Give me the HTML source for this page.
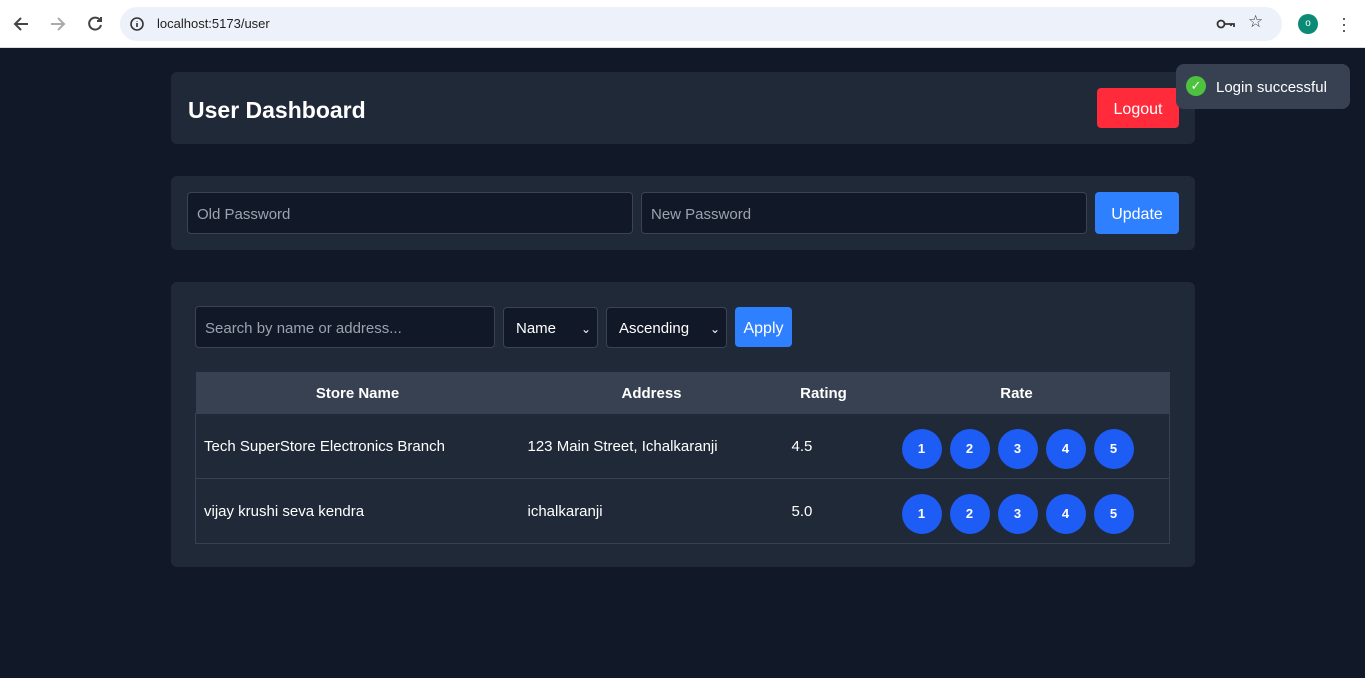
<!DOCTYPE html>
<html><head><meta charset="utf-8"><style>
*{box-sizing:border-box;margin:0;padding:0}
body{width:1365px;height:678px;background:#111827;font-family:"Liberation Sans",sans-serif;color:#fff;position:relative;overflow:hidden}
.chrome{position:absolute;left:0;top:0;width:1365px;height:48px;background:#fff;border-bottom:1px solid #ddd}
.url{position:absolute;left:120px;top:7px;width:1162px;height:34px;background:#edf1f9;border-radius:17px}
.card{position:absolute;left:171px;width:1024px;background:#1f2937;border-radius:6px}
.inp{position:absolute;background:#111827;border:1px solid #3b4452;border-radius:4px;color:#9ca3af;font-size:15px;padding-left:9px;padding-top:2px;display:flex;align-items:center}
.btn{position:absolute;border-radius:4px;color:#fff;font-size:16px;display:flex;align-items:center;justify-content:center;padding-top:3px}
table{position:absolute;left:24px;top:90px;width:975px;border-collapse:collapse;font-size:15px}
th{background:#374151;height:41px;font-weight:bold;text-align:center;padding-top:2px}
td{height:65px;border:1px solid #374151;border-left:none;border-right:none;padding-left:8px;padding-top:2px}
tr td:first-child{border-left:1px solid #374151}tr td:last-child{border-right:1px solid #374151}
.c{display:inline-block;width:40px;height:40px;border-radius:50%;background:#1d5cf5;margin-right:8px;font-size:13px;font-weight:bold;line-height:40px;text-align:center}
</style></head><body>
<div class="chrome">
<svg style="position:absolute;left:12px;top:15px" width="100" height="18" fill="none" stroke-width="2"><path d="M16 9H3M9 3L3 9l6 6" stroke="#444"/><path d="M39 9h13M46 3l6 6-6 6" stroke="#aaa"/><path d="M88 5a6 6 0 1 0 1 5M89 2v4h-4" stroke="#444"/></svg>
<div class="url"><svg style="position:absolute;left:10px;top:10px" width="14" height="14"><circle cx="7" cy="7" r="6" fill="none" stroke="#333" stroke-width="1.6"/><path d="M7 6v4M7 4v.5" stroke="#333" stroke-width="1.6"/></svg>
<span style="position:absolute;left:37px;top:9px;font-size:13px;color:#222">localhost:5173/user</span>
<svg style="position:absolute;left:1096px;top:11px" width="20" height="12" fill="none" stroke="#333" stroke-width="1.8"><circle cx="5" cy="6" r="3.5"/><path d="M9 6h9v3M15 6v2"/></svg>
<span style="position:absolute;left:1128px;top:5px;font-size:17px;color:#333">☆</span></div>
<div style="position:absolute;left:1298px;top:14px;width:20px;height:20px;border-radius:50%;background:#0b8a76;color:#fff;font-size:10px;text-align:center;line-height:20px">o</div>
<div style="position:absolute;left:1341px;top:15px;color:#444;font-size:18px;line-height:6px">·<br>·<br>·</div>
</div>
<div class="card" style="top:72px;height:72px"><div style="position:absolute;left:17px;top:25px;font-size:23px;font-weight:bold">User Dashboard</div>
<div class="btn" style="left:926px;top:16px;width:82px;height:40px;background:#ff2a3a">Logout</div></div>
<div class="card" style="top:176px;height:74px">
<div class="inp" style="left:16px;top:16px;width:446px;height:42px">Old Password</div>
<div class="inp" style="left:470px;top:16px;width:446px;height:42px">New Password</div>
<div class="btn" style="left:924px;top:16px;width:84px;height:42px;background:#2f80ff">Update</div></div>
<div class="card" style="top:282px;height:285px">
<div class="inp" style="left:24px;top:24px;width:300px;height:42px">Search by name or address...</div>
<div class="inp" style="left:332px;top:25px;width:95px;height:41px;color:#fff;padding-left:12px">Name<span style="position:absolute;right:6px;font-size:12px">⌄</span></div>
<div class="inp" style="left:435px;top:25px;width:121px;height:41px;color:#fff;padding-left:12px">Ascending<span style="position:absolute;right:6px;font-size:12px">⌄</span></div>
<div class="btn" style="left:564px;top:25px;width:57px;height:40px;background:#2f80ff">Apply</div>
<table><tr><th style="width:324px">Store Name</th><th style="width:264px">Address</th><th style="width:80px">Rating</th><th>Rate</th></tr>
<tr><td>Tech SuperStore Electronics Branch</td><td>123 Main Street, Ichalkaranji</td><td>4.5</td><td style="padding-left:38px;padding-top:6px"><span class="c">1</span><span class="c">2</span><span class="c">3</span><span class="c">4</span><span class="c">5</span></td></tr>
<tr><td>vijay krushi seva kendra</td><td>ichalkaranji</td><td>5.0</td><td style="padding-left:38px;padding-top:6px"><span class="c">1</span><span class="c">2</span><span class="c">3</span><span class="c">4</span><span class="c">5</span></td></tr></table>
</div>
<div style="position:absolute;left:1176px;top:64px;width:174px;height:45px;background:#374151;border-radius:8px">
<div style="position:absolute;left:10px;top:12px;width:20px;height:20px;border-radius:50%;background:#4cc23e;color:#fff;font-size:13px;text-align:center;line-height:20px">✓</div>
<span style="position:absolute;left:40px;top:15px;font-size:15px">Login successful</span></div>
</body></html>
